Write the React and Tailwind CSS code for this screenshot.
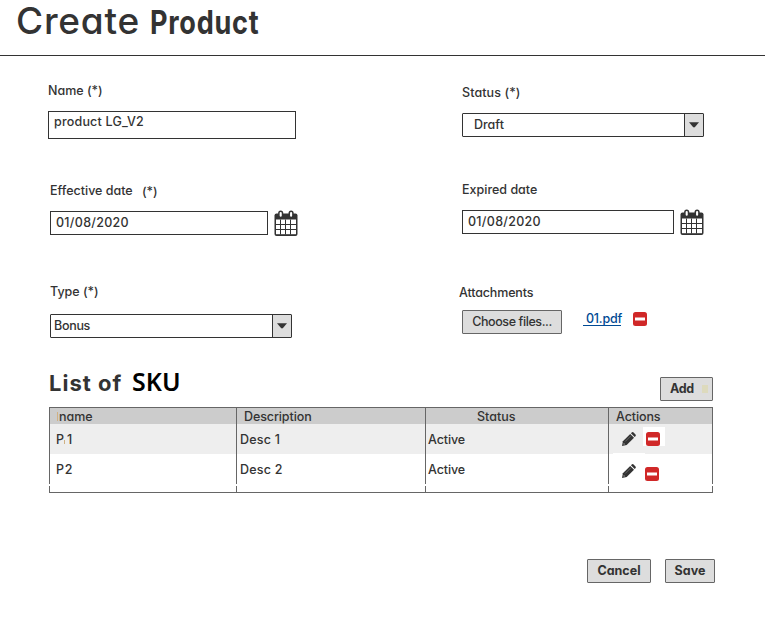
import React from 'react';

function CalendarIcon() {
  return (
    <svg width="24" height="27" viewBox="0 0 24 27" className="block shrink-0" fill="none">
      <path d="M2.5 3.5H21.5Q23.5 3.5 23.5 5.5V24Q23.5 26 21.5 26H2.5Q.5 26 .5 24V5.5Q.5 3.5 2.5 3.5Z" fill="#333" />
      <path d="M2 9.5H22V24.2H2Z" fill="#fff" />
      <path d="M2 14.5H22M2 19.5H22M6.5 9.5V24.5M11.5 9.5V24.5M16.5 9.5V24.5" stroke="#333" strokeWidth="1" />
      <rect x="4.9" y="1.2" width="3.6" height="6.4" rx="1.8" fill="#fff" stroke="#333" strokeWidth="1.5" />
      <rect x="15.3" y="1.2" width="3.6" height="6.4" rx="1.8" fill="#fff" stroke="#333" strokeWidth="1.5" />
    </svg>
  );
}

function MinusIcon() {
  return (
    <svg width="14" height="14" viewBox="0 0 14 14" className="block shrink-0">
      <rect width="14" height="14" rx="2.5" fill="#d02828" />
      <rect x="2" y="5.5" width="10" height="3" fill="#fff" />
    </svg>
  );
}

function PencilIcon() {
  return (
    <svg width="14" height="14" viewBox="0 0 14 14" className="block shrink-0">
      <path d="M0 14L.9 9.3L8.2 2L12 5.8L4.7 13.1Z" fill="#333" />
      <path d="M8.9 1.3L10 .3Q10.8-.2 11.6.5L13.5 2.4Q14.2 3.2 13.6 4L12.7 5.1Z" fill="#333" />
      <path d="M3.2 9.5L8.8 3.9" stroke="#888" strokeWidth=".6" />
      <path d="M1.8 10.9L3.1 12.2L1.5 12.5Z" fill="#ccc" />
    </svg>
  );
}

function Select({ children, className }) {
  return (
    <div className="flex h-6 w-[242px] rounded-[1px] border border-[#333] leading-[22px]">
      <div className={'flex-1 ' + className}>{children}</div>
      <div className="flex w-[19px] items-center justify-center border-l border-[#333] bg-[#ddd]">
        <svg width="10" height="6" viewBox="0 0 10 6">
          <path d="M0 .3H10L6 5Q5 5.9 4 5Z" fill="#333" />
        </svg>
      </div>
    </div>
  );
}

const button = 'h-6 rounded-[1px] border border-[#666] bg-[#ddd] text-center leading-[22px]';

export default function App() {
  return (
    <div className="h-[624px] w-[765px] bg-white font-['Inter',sans-serif] text-[12.5px] leading-4 font-[450] whitespace-nowrap text-[#333] [font-feature-settings:'cv11'_1]">
      <header className="flex h-14 border-b border-[#333] pl-4 leading-[42px]">
        <h1 className="flex">
          <span className="w-[134px] text-[37px] leading-[42px] font-medium tracking-[0.8px]">Create</span>
          <span className="origin-left scale-x-[0.82] pt-[1px] text-[33px] font-bold tracking-[0.9px]">Product</span>
        </h1>
      </header>

      <main>
        <div className="flex h-[317px] pl-12">
          <section className="w-[412px] pt-[27px]">
            <div>Name (*)</div>
            <div className="mt-[12px] h-7 w-[248px] border border-[#333] pl-[5px] leading-[20px] tracking-[0.2px]">product LG_V2</div>
            <div className="mt-[44px] flex pl-[2px]">
              <span className="w-[92px]">Effective date</span>
              <span className="-mb-1 pt-[1px]">(*)</span>
            </div>
            <div className="mt-[12px] flex pl-[2px]">
              <div className="mr-[6px] h-6 w-[218px] border border-[#333] pl-[5px] leading-[22px] tracking-[0.3px]">01/08/2020</div>
              <div className="-mt-[1px] h-6"><CalendarIcon /></div>
            </div>
            <div className="mt-[49px] pl-[2px]">Type (*)</div>
            <div className="mt-[14px] pl-[2px]"><Select className="pl-[3px] tracking-[-0.3px]">Bonus</Select></div>
          </section>

          <section className="pt-[29px]">
            <div className="pl-[2px] tracking-[0.1px]">Status (*)</div>
            <div className="mt-[12px] pl-[2px]"><Select className="pl-[11px]">Draft</Select></div>
            <div className="mt-[45px] pl-[2px]">Expired date</div>
            <div className="mt-[12px] flex pl-[2px]">
              <div className="mr-[6px] h-6 w-[212px] border border-[#333] pl-[5px] leading-[22px] tracking-[0.3px]">01/08/2020</div>
              <div className="-mt-[1px] h-6"><CalendarIcon /></div>
            </div>
            <div className="mt-[51px] -ml-px tracking-[-0.15px]">Attachments</div>
            <div className="mt-[9px] flex pl-[2px]">
              <button className={button + ' w-[100px] font-medium tracking-[-0.4px]'}>Choose files...</button>
              <a className="mt-[1px] ml-[21px] h-[15px] w-[38px] border-b border-[#004a94] pl-[3px] tracking-[-0.2px] text-[#004a94]">01.pdf</a>
              <div className="mt-[2px] ml-3"><MinusIcon /></div>
            </div>
          </section>
        </div>

        <div className="flex h-[34px] pl-[49px]">
          <h2 className="flex w-[611px] leading-5">
            <span className="w-[83px] text-[22px] font-bold tracking-[1px]">List of</span>
            <span className="origin-left scale-x-[0.96] font-['Noto_Sans',sans-serif] text-[26px] leading-[17px] font-semibold text-black">SKU</span>
          </h2>
          <button className={button + ' mt-1 flex w-[53px] items-center pl-[9px] font-bold tracking-[-0.4px]'}>
            Add<span className="ml-[8px] h-2 w-[6px] bg-[#dddabd]" />
          </button>
        </div>

        <div className="ml-[49px] w-[664px]">
          <div className="grid h-[17px] grid-cols-[187px_189px_183px_105px] border-t border-[#666] bg-[#ccc] leading-[18px]">
            <div className="h-4 border-l border-[#666] pl-[7px]"><span className="mr-[1px] inline-block h-[9px] w-px bg-[#d0b184]" />name</div>
            <div className="h-4 border-l border-[#666] pl-[7px] tracking-[-0.1px]">Description</div>
            <div className="h-4 border-l border-[#666] pl-[51px]">Status</div>
            <div className="h-4 border-x border-[#666] pl-[7px] tracking-[-0.1px]">Actions</div>
          </div>
          <div className="grid h-[30px] grid-cols-[187px_189px_183px_105px] bg-[#eee] leading-[32px]">
            <div className="h-[30px] border-l border-[#666] pl-[6px]">P<span className="mr-[2px] inline-block h-[4px] w-px bg-[#d0b184]" />1</div>
            <div className="h-[30px] border-l border-[#666] pl-[3px] tracking-[0.2px]">Desc 1</div>
            <div className="h-[30px] border-l border-[#666] pl-[2px] tracking-[-0.1px]">Active</div>
            <div className="flex h-[30px] border-x border-[#666] pt-[3px] pl-[13px]">
              <div className="pt-[5px]"><PencilIcon /></div>
              <div className="ml-[7px] h-[19px] w-[22px] bg-white pt-[5px] pl-[3px]"><MinusIcon /></div>
            </div>
          </div>
          <div className="grid h-[30px] grid-cols-[187px_189px_183px_105px] leading-[32px]">
            <div className="h-[30px] border-l border-[#666] pl-[6px] tracking-[0.8px]">P2</div>
            <div className="h-[30px] border-l border-[#666] pl-[3px] tracking-[0.2px]">Desc 2</div>
            <div className="h-[30px] border-l border-[#666] pl-[2px] tracking-[-0.1px]">Active</div>
            <div className="flex h-[30px] border-x border-[#666] pl-[4px]">
              <div className="-mt-[1px] h-[30px] w-8 bg-white pt-[11px] pl-[9px]"><PencilIcon /></div>
              <div className="mt-[13px]"><MinusIcon /></div>
            </div>
          </div>
          <div className="mt-[2px] grid h-[7px] grid-cols-[187px_189px_183px_105px] border-b border-[#666]">
            <div className="border-l border-[#666]" />
            <div className="border-l border-[#666]" />
            <div className="border-l border-[#666]" />
            <div className="border-x border-[#666]" />
          </div>
        </div>

        <div className="mt-[66px] flex gap-[14px] pl-[587px]">
          <button className={button + ' w-16 font-bold'}>Cancel</button>
          <button className={button + ' w-[50px] font-bold'}>Save</button>
        </div>
      </main>
    </div>
  );
}
